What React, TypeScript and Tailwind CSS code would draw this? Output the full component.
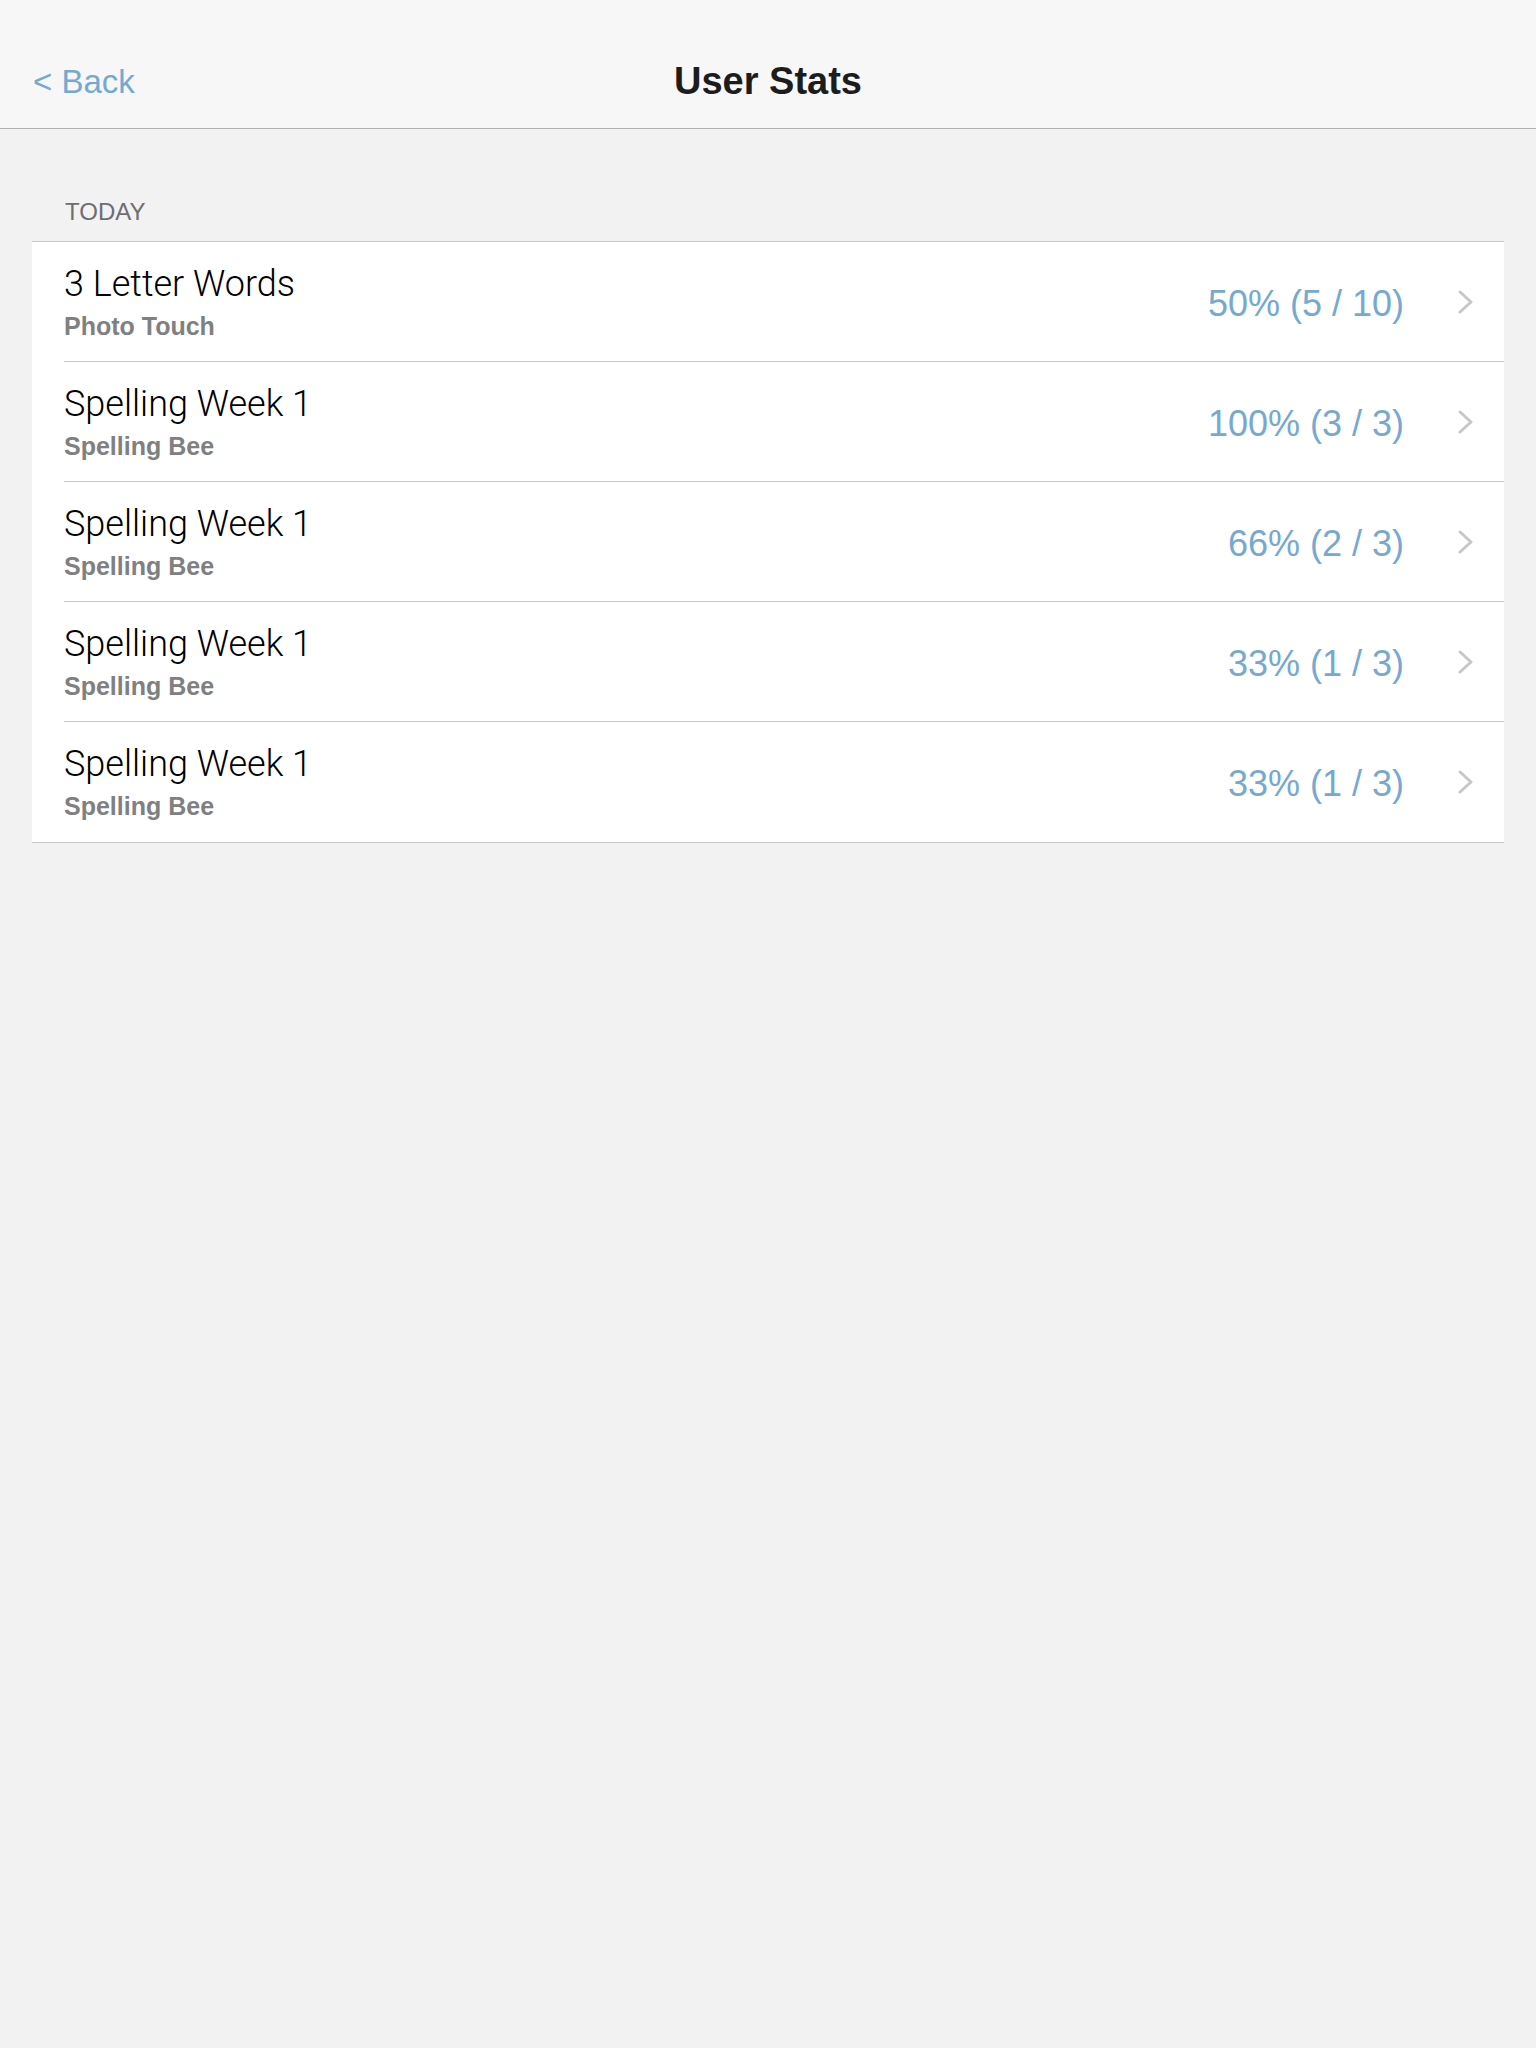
import React from 'react'

interface StatRow {
  title: string
  app: string
  score: string
}

const rows: StatRow[] = [
  { title: '3 Letter Words', app: 'Photo Touch', score: '50% (5 / 10)' },
  { title: 'Spelling Week 1', app: 'Spelling Bee', score: '100% (3 / 3)' },
  { title: 'Spelling Week 1', app: 'Spelling Bee', score: '66% (2 / 3)' },
  { title: 'Spelling Week 1', app: 'Spelling Bee', score: '33% (1 / 3)' },
  { title: 'Spelling Week 1', app: 'Spelling Bee', score: '33% (1 / 3)' },
]

function Chevron() {
  return (
    <svg width="15" height="24" viewBox="0 0 15 24" fill="none" className="shrink-0">
      <polyline points="2,2 13,12 2,22" stroke="#c7c7cc" strokeWidth="3" strokeLinecap="round" strokeLinejoin="round" />
    </svg>
  )
}

export default function App() {
  return (
    <div className="min-h-[2048px] w-full bg-[#f2f2f2] font-['Liberation_Sans',Arial,sans-serif]">
      {/* Navigation bar */}
      <header className="h-[129px] bg-[#f7f7f7] border-b border-[#b2b2b2] pt-[40px]">
        <div className="relative h-[88px] flex items-center justify-center">
          <button className="absolute left-[33px] top-[22px] text-[33px] leading-[40px] text-[#75a9cf]">
            &lt; Back
          </button>
          <h1 className="text-[38px] leading-[44px] font-semibold text-[#1c1c1c] -mt-[6px]">User Stats</h1>
        </div>
      </header>

      {/* Section */}
      <div className="pt-[67px] px-[32px]">
        <div className="pl-[33px] text-[24px] leading-[32px] text-[#6d6d72] mb-[13px]">TODAY</div>
        <ul className="bg-white border-t border-b border-[#c8c7cc]">
          {rows.map((row, i) => (
            <li key={i} className="pl-[32px]">
              <div className={`h-[120px] flex items-center pr-[31px] ${i < rows.length - 1 ? 'border-b border-[#c8c7cc]' : ''}`}>
                <div className="flex-1 flex flex-col gap-[8px]">
                  <span className="text-[36px] leading-[40px] font-light text-black font-['Roboto',sans-serif]">{row.title}</span>
                  <span className="text-[25px] leading-[28px] font-semibold text-[#808080]">{row.app}</span>
                </div>
                <span className="text-[36px] leading-[44px] text-[#75a9cf] mr-[54px] mt-[4px]">{row.score}</span>
                <Chevron />
              </div>
            </li>
          ))}
        </ul>
      </div>
    </div>
  )
}
